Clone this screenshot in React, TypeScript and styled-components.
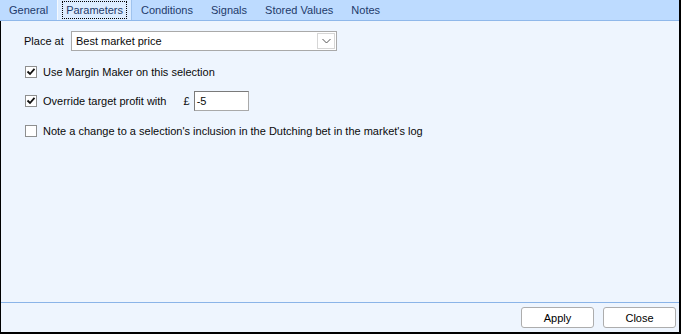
import React, { FC } from 'react'
import styled, { createGlobalStyle } from 'styled-components'

const Global = createGlobalStyle`
  html, body { margin: 0; padding: 0; background: #eef5fe; }
  body { font-family: "Liberation Sans", Arial, sans-serif; font-size: 11px; color: #0a0a0a; }
`

const tabs = ['General', 'Parameters', 'Conditions', 'Signals', 'Stored Values', 'Notes']

const Window = styled.div`
  width: 681px;
  height: 334px;
  box-sizing: border-box;
  display: flex;
  flex-direction: column;
  background: #eef5fe;
  border-left: 1px solid #000;
  border-right: 2px solid #000;
  border-bottom: 2px solid #000;
`
const TabStrip = styled.div`
  height: 20px;
  display: flex;
  align-items: stretch;
  background: #bddbff;
  border-bottom: 1px solid #8fb8ea;
  margin-left: -1px;
`
const Tab = styled.div<{ $active?: boolean }>`
  display: flex;
  align-items: center;
  padding: 0 6px;
  color: #1e3a6a;
  background: ${p => (p.$active ? '#dcecff' : 'transparent')};
  box-shadow: ${p => (p.$active ? 'inset 1px 0 #f4f9ff, inset -1px 0 #9fc3ee' : 'none')};
  span {
    padding: 0 3px;
    outline: ${p => (p.$active ? '1px dotted #000' : 'none')};
    outline-offset: 0;
    line-height: 16px;
  }
`
const Body = styled.div`
  flex: 1;
  padding: 10px 0 0 23px;
  display: flex;
  flex-direction: column;
`
const Row = styled.div<{ $mt?: number }>`
  display: flex;
  align-items: center;
  margin-top: ${p => p.$mt ?? 0}px;
  height: 20px;
`
const Label = styled.span`
  width: 47px;
`
const Select = styled.div`
  width: 266px;
  height: 20px;
  box-sizing: border-box;
  border: 1px solid #a9a9a9;
  background: #fff;
  display: flex;
  align-items: center;
  justify-content: space-between;
  padding-left: 4px;
`
const DropBtn = styled.div`
  width: 18px;
  height: 16px;
  margin-right: 1px;
  box-sizing: border-box;
  border: 1px solid #d6d6d6;
  display: flex;
  align-items: center;
  justify-content: center;
`
const Box = styled.div`
  width: 12px;
  height: 12px;
  box-sizing: border-box;
  border: 1px solid #8e8f8f;
  background: #fff;
  margin: 0 6px 0 1px;
  display: flex;
  align-items: center;
  justify-content: center;
`
const Pound = styled.span`
  margin-left: 17px;
  margin-right: 4px;
`
const Input = styled.div`
  width: 55px;
  height: 20px;
  box-sizing: border-box;
  border: 1px solid #a9a9a9;
  border-top-color: #7a7a7a;
  border-left-color: #7a7a7a;
  background: #fff;
  display: flex;
  align-items: center;
  padding-left: 2px;
`
const Footer = styled.div`
  height: 29px;
  border-top: 1px solid #8ab4e8;
  display: flex;
  justify-content: flex-end;
  align-items: center;
  gap: 9px;
  padding-right: 3px;
`
const Button = styled.div`
  width: 73px;
  height: 21px;
  box-sizing: border-box;
  border: 1px solid #adadad;
  border-radius: 3px;
  background: #fff;
  display: flex;
  align-items: center;
  justify-content: center;
  color: #000;
`

const Check: FC<{ checked?: boolean }> = ({ checked }) => (
  <Box>
    {checked && (
      <svg width="10" height="10" viewBox="0 0 10 10">
        <path d="M1.5 4.5 L4 7 L8.5 1.8" stroke="#111" strokeWidth="1.8" fill="none" />
      </svg>
    )}
  </Box>
)

const App: FC = () => (
  <>
    <Global />
    <Window>
      <TabStrip>
        {tabs.map(t => (
          <Tab key={t} $active={t === 'Parameters'}>
            <span>{t}</span>
          </Tab>
        ))}
      </TabStrip>
      <Body>
        <Row>
          <Label>Place at</Label>
          <Select>
            <span>Best market price</span>
            <DropBtn>
              <svg width="9" height="6" viewBox="0 0 9 6">
                <path d="M0.5 1 L4.5 5 L8.5 1" stroke="#555" strokeWidth="1" fill="none" />
              </svg>
            </DropBtn>
          </Select>
        </Row>
        <Row $mt={11}>
          <Check checked />
          <span>Use Margin Maker on this selection</span>
        </Row>
        <Row $mt={9}>
          <Check checked />
          <span>Override target profit with</span>
          <Pound>£</Pound>
          <Input>-5</Input>
        </Row>
        <Row $mt={10}>
          <Check />
          <span>Note a change to a selection's inclusion in the Dutching bet in the market's log</span>
        </Row>
      </Body>
      <Footer>
        <Button>Apply</Button>
        <Button>Close</Button>
      </Footer>
    </Window>
  </>
)

export default App
